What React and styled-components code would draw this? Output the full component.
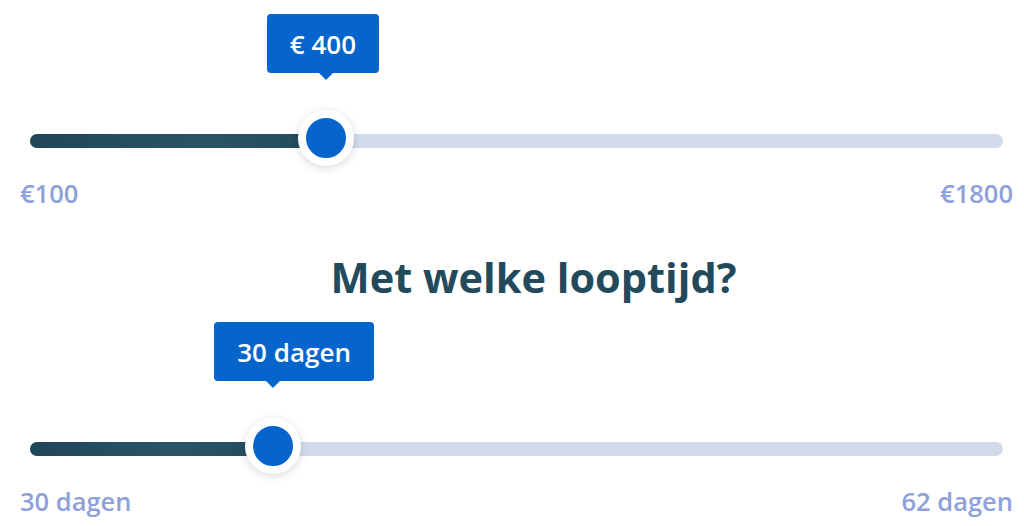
import React from "react";
import styled, { createGlobalStyle } from "styled-components";

const GlobalStyle = createGlobalStyle`
    body {
        margin: 0;
        background: #ffffff;
        font-family: "Open Sans", "Liberation Sans", sans-serif;
    }
`;

const Page = styled.div`
    width: 1024px;
    height: 526px;
    padding: 0 11px 0 20px;
    box-sizing: border-box;
    overflow: hidden;
`;

const SliderBlock = styled.div`
    padding-top: ${(props) => props.top}px;
`;

const Track = styled.div`
    position: relative;
    height: 14px;
    margin: 0 10px;
    border-radius: 7px;
    background: #d3dbea;
`;

const Fill = styled.div`
    height: 100%;
    border-radius: 7px 0 0 7px;
    background: linear-gradient(90deg, #1f4657 0%, #2a5566 60%, #22495a 100%);
`;

const Thumb = styled.div`
    position: absolute;
    top: 50%;
    width: 40px;
    height: 40px;
    margin: -28px 0 0 -28px;
    border-radius: 50%;
    background: #0565cc;
    border: 8px solid #ffffff;
    transform: translateY(-3px);
    box-shadow: 0 2px 8px rgba(30, 50, 80, 0.18);
`;

const Bubble = styled.div`
    position: absolute;
    bottom: 75px;
    transform: translateX(-59px);
    padding: 0 23px;
    height: 59px;
    display: flex;
    align-items: center;
    border-radius: 4px;
    background: #0565cc;
    color: #ffffff;
    font-size: 26px;
    font-weight: 600;
    white-space: nowrap;

    &::after {
        content: "";
        position: absolute;
        left: 59px;
        bottom: -7px;
        margin-left: -7px;
        border-left: 7px solid transparent;
        border-right: 7px solid transparent;
        border-top: 7px solid #0565cc;
    }
`;

const Labels = styled.div`
    display: flex;
    justify-content: space-between;
    margin-top: 30px;
    line-height: 30px;
    font-size: 25.5px;
    font-weight: 600;
    color: #8ea1db;
`;

const Heading = styled.h2`
    margin: 43px 0 0;
    padding-left: 34px;
    text-align: center;
    line-height: 52px;
    font-size: 41.5px;
    font-weight: 700;
    color: #234a5b;
`;

const Slider = ({ top, pct, value, min, max }) => (
    <SliderBlock top={top}>
        <Track>
            <Fill style={{ width: `${pct}%` }} />
            <Bubble style={{ left: `${pct}%` }}>{value}</Bubble>
            <Thumb style={{ left: `${pct}%` }} />
        </Track>
        <Labels>
            <span>{min}</span>
            <span>{max}</span>
        </Labels>
    </SliderBlock>
);

const App = () => {
    return (
        <Page>
            <GlobalStyle />
            <Slider top={134} pct={30.4} value="€ 400" min="€100" max="€1800" />
            <Heading>Met welke looptijd?</Heading>
            <Slider top={139} pct={25} value="30 dagen" min="30 dagen" max="62 dagen" />
        </Page>
    );
};

export default App;
